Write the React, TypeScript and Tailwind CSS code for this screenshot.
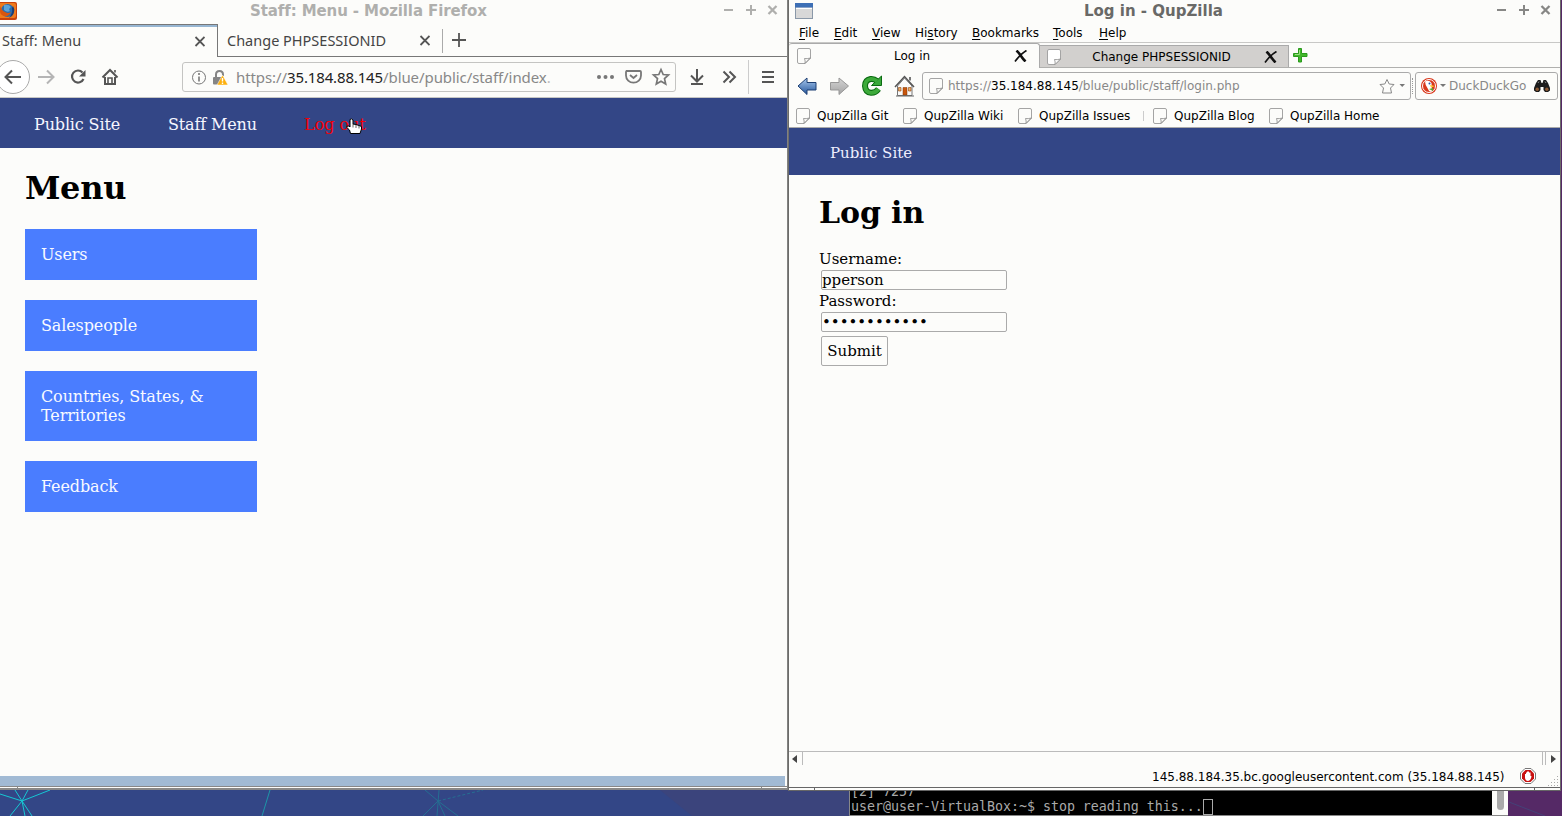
import type { ReactNode } from "react";

const sans = "font-['DejaVu_Sans',sans-serif]";
const ubuntu = "font-['Noto_Sans',sans-serif]";

function WindowButtons({ color }: { color: string }) {
  return (
    <svg width="54" height="12" viewBox="0 0 54 12" className="shrink-0" stroke={color} strokeWidth="2" fill="none">
      <path d="M0 6H9M22 6H32M27 1V11" />
      <path d="M44.500 2L52.500 10M44.500 10L52.500 2" strokeWidth="2.300" />
    </svg>
  );
}

function PageIcon({ white }: { white?: boolean }) {
  return (
    <svg width="14" height="16" viewBox="0 0 14 16" className="shrink-0" fill={white ? "#fff" : "none"} stroke="#a4a4a4" strokeWidth="1">
      <path d="M2 .5H12Q13.500 .5 13.500 2V10L8 15.500H2Q.5 15.500 .5 14V2Q.5 .5 2 .5Z" />
      <path d="M8 15.500Q8.500 13 7.500 10.500Q10 11 13.500 10Z" stroke="#888" strokeWidth=".8" />
    </svg>
  );
}

function TabX() {
  return (
    <svg width="13" height="12" viewBox="0 0 13 12" className="shrink-0" fill="none" stroke="#111">
      <path d="M2.500 .5Q5 3 7 6T11.500 11.500" strokeWidth="2.600" />
      <path d="M12.500 .5Q7 3.500 1 11.500" strokeWidth="1.700" />
    </svg>
  );
}

function FirefoxX() {
  return (
    <svg width="11" height="11" viewBox="0 0 11 11" className="shrink-0" stroke="#555" strokeWidth="1.800">
      <path d="M1.500 1L10.500 10M10.500 1L1.500 10" />
    </svg>
  );
}

function FirefoxLogo() {
  return (
    <svg width="17" height="18" viewBox="0 0 17 18" className="shrink-0">
      <rect x="-4" y="0" width="21" height="18" rx="2" fill="#c9420b" />
      <rect x="-4" y="1" width="20" height="15" rx="2" fill="#ef7a1c" />
      <circle cx="7.500" cy="8.500" r="6.500" fill="#2b6cae" />
      <path d="M4 3Q9 2 11 5Q8 7 10 9Q7 11 4 8Z" fill="#5ba3d9" />
      <path d="M0 4Q2 9 5 10Q8 12 11 10Q9 15 4 14Q0 13 0 9Z" fill="#d9560f" />
      <path d="M13 4Q16 9 12 14L9 16Q13 11 12 6Z" fill="#1c3d73" />
    </svg>
  );
}

function FirefoxWindow() {
  return (
    <section className="absolute left-0 top-0 flex h-[790px] w-[789px] flex-col border-r-2 border-[#828280] bg-[#fcfcfa]">
      <header className="flex h-6 shrink-0 items-start">
        <div className="w-[250px] pt-0.5"><FirefoxLogo /></div>
        <h2 className={`${sans} w-[474px] pt-0.5 text-[15px] leading-[18px] font-bold tracking-[-0.1px] whitespace-nowrap text-[#afafad]`}>Staff: Menu - Mozilla Firefox</h2>
        <div className="pt-1"><WindowButtons color="#afafad" /></div>
      </header>

      <div className={`${ubuntu} flex h-[33px] shrink-0 text-[14.5px] text-[#444]`}>
        <div className="flex w-[218px] items-center border-t border-r border-[#777] pl-0.5 shadow-[inset_0_2px_0_#97b6d2]">
          <span className="w-[192px] tracking-[0.1px]">Staff: Menu</span>
          <FirefoxX />
        </div>
        <div className="flex flex-1 items-center border-b border-[#777] pt-px pl-[9px]">
          <span className="w-[192px] whitespace-nowrap">Change PHPSESSIONID</span>
          <FirefoxX />
          <div className="ml-3 h-6 w-px bg-[#aaa]" />
          <svg width="14" height="14" viewBox="0 0 14 14" className="ml-[9px] mb-0.5" stroke="#555" strokeWidth="1.800"><path d="M0 7H14M7 0V14" /></svg>
        </div>
      </div>

      <div className="flex h-[41px] shrink-0 items-center border-b border-[#c6c6c4]">
        <svg width="182" height="40" viewBox="0 0 182 40" className="shrink-0" fill="none" stroke="#555" strokeWidth="2">
          <circle cx="13" cy="20" r="16.500" strokeWidth="1" stroke="#aaa" fill="#fff" />
          <path d="M21 20H6M12 13.500L5.500 20L12 26.500" />
          <path d="M38 20H53M47 13.500L53.500 20L47 26.500" stroke="#b5b5b5" />
          <path d="M82.500 15.500A6 6 0 1 0 83.500 22" strokeWidth="2.200" />
          <path d="M85.500 13V19.500H79Z" fill="#555" stroke="none" />
          <path d="M102.500 20.500L110 13L117.500 20.500M105 20V27H115V20" />
          <path d="M108 27V21H112V27M115 15.500V13" strokeWidth="1.600" />
        </svg>
        <div className={`${ubuntu} flex h-[30px] w-[494px] shrink-0 items-center rounded-[3px] border border-[#c4c4c2] pl-[9px] text-[15px] text-[#888]`}>
          <svg width="36" height="18" viewBox="0 0 36 18" className="mt-0.5 shrink-0" fill="none">
            <circle cx="7" cy="8.500" r="6.500" stroke="#777" />
            <path d="M7 7.500V12.500M7 4V6" stroke="#777" strokeWidth="1.600" />
            <path d="M24 8V5.500Q24 2 27.500 2Q31 2 31 5.500V7" stroke="#858585" strokeWidth="2" />
            <rect x="21" y="8" width="10" height="7.500" rx="1" fill="#858585" />
            <path d="M30.500 6L36 16H25Z" fill="#fdb00d" stroke="#fff" strokeWidth=".5" />
            <path d="M30.500 9V12.500M30.500 13.500V15" stroke="#fff" strokeWidth="1.400" />
          </svg>
          <span className="ml-2 w-[318px] shrink-0 tracking-[-0.08px] whitespace-nowrap">https://<span className="tracking-[-0.15px] text-[#222]">35.184.88.145</span>/blue/public/staff/index<span className="text-[#bbb]">.</span></span>
          <svg width="76" height="20" viewBox="0 0 76 20" className="ml-[41px] shrink-0" fill="none" stroke="#777" strokeWidth="2">
            <g fill="#777" stroke="none"><circle cx="4" cy="10" r="2" /><circle cx="10.500" cy="10" r="2" /><circle cx="17" cy="10" r="2" /></g>
            <path d="M30 4H44Q45 4 45 5V8.500A7.500 7.200 0 0 1 30 8.500V5Q30 4 31 4ZM34 8L37.500 11L41 8" strokeWidth="1.800" transform="translate(1 0)" />
            <path d="M66 2.500L68.200 7.500L73.500 8L69.500 11.600L70.700 17L66 14.200L61.300 17L62.500 11.600L58.500 8L63.800 7.500Z" strokeWidth="1.700" />
          </svg>
        </div>
        <svg width="111" height="40" viewBox="0 0 111 40" className="shrink-0" fill="none" stroke="#555" strokeWidth="2">
          <path d="M21 12V24M15 18.500L21 24.500L27 18.500M15 27H27" />
          <path d="M47.500 14.500L53 20L47.500 25.500M53.500 14.500L59 20L53.500 25.500" />
          <path d="M72.500 3V37" stroke="#ccc" strokeWidth="1" />
          <path d="M86 15H98M86 20H98M86 25H98" />
        </svg>
      </div>

      <nav className="flex h-[50px] shrink-0 items-center bg-[#334686] pt-[3px] font-['DejaVu_Serif',serif] text-[16px] tracking-[-0.14px] text-[#f6f6ff]">
        <a className="ml-[34px] w-[134px] whitespace-nowrap">Public Site</a>
        <a className="w-[136px] whitespace-nowrap">Staff Menu</a>
        <a className="relative tracking-normal whitespace-nowrap text-[#f50006]">
          Log out
          <svg width="17" height="18" viewBox="0 0 17 18" className="absolute top-[5px] left-[42px]" fill="#fff" stroke="#000" strokeWidth="1">
            <path d="M4 1.500Q5.500 0 7 2V6L10 6.500L13 7.500L15.500 8.500V11L14 15.500H4.500L3.500 12L.8 9.500Q.5 7.500 3 8L4 9Z" />
            <path d="M7 6V9.500M10 7V10M13 8V10.500" strokeWidth=".6" />
          </svg>
        </a>
      </nav>

      <main className="flex-1 pl-[25px] font-['DejaVu_Serif',serif] text-black">
        <h1 className="pt-[21px] text-[32px] leading-[38px] font-bold tracking-[-0.3px]">Menu</h1>
        <ul className="mt-[22px] flex w-[232px] flex-col gap-5 text-[16px] leading-[19px] tracking-[-0.12px] text-[#f8faff]">
          {["Users", "Salespeople", "Countries, States, & Territories", "Feedback"].map((t) => (
            <li key={t} className="bg-[#4a7dff] p-4">{t}</li>
          ))}
        </ul>
      </main>
      <div className="mr-0.5 h-[10px] shrink-0 bg-[#a1bad4]" />
      <div className="flex h-1 shrink-0 border-t border-b-2 border-[#888]">
        <div className="w-[18px] border-r border-[#888]" />
        <div className="w-[744px] border-r border-[#888]" />
      </div>
    </section>
  );
}

function MenuItem({ pre, k, post, w }: { pre?: string; k: string; post: string; w: string }) {
  return <span className={`${w} shrink-0`}>{pre}<u className="underline-offset-2">{k}</u>{post}</span>;
}

function Bookmark({ w, children }: { w: string; children: ReactNode }) {
  return <div className={`${w} flex shrink-0 items-center gap-[7px] whitespace-nowrap`}><PageIcon />{children}</div>;
}

function Toolbar() {
  return (
    <div className="flex h-[36px] shrink-0 items-center">
      <svg width="133" height="32" viewBox="0 0 133 32" className="shrink-0">
        <defs>
          <linearGradient id="b" x2="0" y2="1"><stop stopColor="#a9c9ee" /><stop offset="1" stopColor="#24569c" /></linearGradient>
          <linearGradient id="g" x2="0" y2="1"><stop stopColor="#d4d4d4" /><stop offset="1" stopColor="#a4a4a4" /></linearGradient>
        </defs>
        <path d="M9 16L18 8V12.500H27V20H18V24.500Z" fill="url(#b)" stroke="#1d3f73" />
        <path d="M59.500 16L50 8V12.500H41.500V20H50V24.500Z" fill="url(#g)" stroke="#979797" />
        <path d="M88 11Q85 8.500 81.500 9Q76 10 76 16Q76.500 22.500 82 22.800Q86.500 23 89.500 19" fill="none" stroke="#0b6b12" strokeWidth="6" />
        <path d="M92.500 6V15.500H82.500Z" fill="#39a83a" stroke="#0b6b12" />
        <path d="M88 11Q85 8.500 81.500 9Q76 10 76 16Q76.500 22.500 82 22.800Q86.500 23 89.500 19" fill="none" stroke="#3daa3a" strokeWidth="3.800" />
        <path d="M108.500 16V25.500H123V16L115.500 8Z" fill="#fafafa" stroke="#777" />
        <path d="M106 17L115.500 6.500L125 17" fill="none" stroke="#555" strokeWidth="1.500" />
        <path d="M121 7V10.500" stroke="#777" strokeWidth="2" />
        <path d="M114 17.500H118V25H114Z" fill="#c9560c" stroke="#7d3705" strokeWidth=".5" />
        <path d="M109.500 17.500H112V21H109.500ZM119.500 17.500H122V21H119.500Z" fill="#e8b070" stroke="#944408" strokeWidth=".6" />
        <path d="M107 26H125" stroke="#666" />
      </svg>
      <div className={`${sans} flex h-[28px] w-[489px] shrink-0 items-center rounded-[3px] border border-[#aaa] pl-[6px] text-[12px] text-[#888]`}>
        <PageIcon />
        <span className="ml-[5px] w-[430px] whitespace-nowrap">https://<span className="text-black">35.184.88.145</span>/blue/public/staff/login.php</span>
        <svg width="28" height="16" viewBox="0 0 28 16" className="shrink-0" fill="none" stroke="#888">
          <path d="M9 1.500L11.200 6L16 6.500L12.500 10L13.500 15H4.500L5.500 10L2 6.500L6.800 6Z" />
          <path d="M21.500 6H27L24.200 9Z" fill="#777" stroke="none" />
        </svg>
      </div>
      <div className="ml-px mr-[2px] h-4 w-px border-l border-dotted border-[#999]" />
      <div className={`${sans} flex h-[28px] w-[143px] shrink-0 items-center rounded-[3px] border border-[#aaa] pl-[5px] text-[12px] text-[#888]`}>
        <svg width="28" height="16" viewBox="0 0 28 16" className="shrink-0">
          <circle cx="8" cy="8" r="8" fill="#d9381c" /><circle cx="8" cy="8" r="6.500" fill="none" stroke="#fff" />
          <path d="M4 3.500Q8 1.500 10.500 5L11 13.500Q8 14.500 7 11Q4 7 4 3.500Z" fill="#fff" />
          <path d="M9 7L14 8L10 9.500Z" fill="#fc3" /><path d="M8 11L12 10V13Z" fill="#5a3" /><circle cx="8.500" cy="5.500" r="1" fill="#25a" />
          <path d="M19 6H25L22 9Z" fill="#777" />
        </svg>
        <span className="w-[85px] whitespace-nowrap">DuckDuckGo</span>
        <svg width="16" height="12" viewBox="0 0 16 12" className="shrink-0" fill="#1c1c1c">
          <path d="M4 0H6.500L7.500 3H8.500L9.500 0H12L14 3L16 8V10.500L14 12H11L9.500 10V7H6.500V10L5 12H2L0 10.500V8L2 3Z" />
          <circle cx="3.200" cy="9.200" r="1.700" fill="#8e5a34" /><circle cx="12.800" cy="9.200" r="1.700" fill="#8e5a34" />
          <path d="M4 3L5 1.500M11 1.500L12 3" stroke="#888" />
        </svg>
      </div>
    </div>
  );
}

function QupZillaWindow() {
  return (
    <section className="absolute left-[788px] top-0 flex h-[791px] w-[773px] flex-col border-x border-[#6c6c6a] bg-[#fcfcfa] text-black">
      <header className="flex h-[23px] shrink-0 items-start">
        <svg width="19" height="17" viewBox="0 0 19 17" className="mt-[3px] ml-1.5 shrink-0">
          <rect x=".5" y=".5" width="17" height="15" fill="#d8d8d8" stroke="#8a98a8" />
          <rect width="18" height="4.500" fill="#3d6fb5" /><path d="M1 5.500H17" stroke="#fff" />
        </svg>
        <h2 className={`${sans} ml-[270px] w-[413px] pt-0.5 text-[15px] leading-[18px] font-bold whitespace-nowrap text-[#696967]`}>Log in - QupZilla</h2>
        <div className="pt-1"><WindowButtons color="#878785" /></div>
      </header>
      <div className={`${sans} flex h-[20px] shrink-0 items-center border-b border-[#c8c8c6] pl-2.5 text-[12px]`}>
        <MenuItem w="w-[35px]" k="F" post="ile" />
        <MenuItem w="w-[38px]" k="E" post="dit" />
        <MenuItem w="w-[43px]" k="V" post="iew" />
        <MenuItem w="w-[57px]" pre="Hi" k="s" post="tory" />
        <MenuItem w="w-[81px]" k="B" post="ookmarks" />
        <MenuItem w="w-[46px]" k="T" post="ools" />
        <MenuItem w="w-[40px]" k="H" post="elp" />
      </div>
      <div className={`${sans} flex h-[25px] shrink-0 text-[12px]`}>
        <div className="flex w-[251px] shrink-0 items-center rounded-t-[3px] border-t border-r border-[#aaa] pl-2">
          <PageIcon />
          <span className="w-[203px] pr-px text-center">Log in</span>
          <TabX />
        </div>
        <div className="flex flex-1 items-end border-b border-[#b0b0ae]">
          <div className="flex h-[22px] w-[249px] shrink-0 items-center border-t border-r border-[#aaa] bg-[#d2d0ce] pl-[7px]">
            <PageIcon white />
            <span className="w-[203px] pr-0.5 text-center">Change PHPSESSIONID</span>
            <TabX />
          </div>
          <svg width="15" height="15" viewBox="0 0 15 15" className="mb-1 ml-1 shrink-0">
            <path d="M5.500 .5H8.500V5.500H14V8.500H8.500V14H5.500V8.500H.5V5.500H5.500Z" fill="#42b82b" stroke="#2a9a1c" />
            <path d="M6.500 2V6.500H2" fill="none" stroke="#9be082" />
          </svg>
        </div>
      </div>
      <Toolbar />
      <div className={`${sans} flex h-[24px] shrink-0 items-center border-b border-[#aaa] pl-[7px] text-[12px]`}>
        <Bookmark w="w-[107px]">QupZilla Git</Bookmark>
        <Bookmark w="w-[115px]">QupZilla Wiki</Bookmark>
        <Bookmark w="w-[125px]">QupZilla Issues</Bookmark>
        <div className="mr-[9px] h-[10px] w-px bg-[#ccc]" />
        <Bookmark w="w-[116px]">QupZilla Blog</Bookmark>
        <Bookmark w="w-[120px]">QupZilla Home</Bookmark>
      </div>
      <div className="flex flex-1 flex-col font-['DejaVu_Serif',serif] text-[15px]">
        <nav className="flex h-[47px] shrink-0 items-center bg-[#334686] pt-[3px] pl-[41px] text-[#eef]">Public Site</nav>
        <main className="flex flex-1 flex-col items-start pl-[30px]">
          <h1 className="mt-5 text-[30px] leading-[36px] font-bold tracking-[-0.1px]">Log in</h1>
          <label className="mt-[18px] leading-[20px]">Username:</label>
          <div className="mt-px ml-0.5 flex h-5 w-[186px] items-center rounded-[2px] border border-[#aaa]">pperson</div>
          <label className="mt-px leading-[20px]">Password:</label>
          <div className="mt-px ml-0.5 flex h-5 w-[186px] items-center rounded-[2px] border border-[#aaa] tracking-[-0.03px]">••••••••••••</div>
          <button className="mt-1 ml-0.5 h-[30px] w-[67px] rounded-[2px] border border-[#aaa]">Submit</button>
        </main>
      </div>
      <div className="flex h-[14px] shrink-0 items-center justify-between border-t border-[#bbb]">
        <div className="flex h-full w-[14px] items-center border-r border-[#bbb] pl-[3px]">
          <svg width="5" height="8" viewBox="0 0 5 8"><path d="M5 0V8L0 4Z" fill="#444" /></svg>
        </div>
        <div className="flex h-full w-[18px] items-center border-l border-[#bbb]">
          <div className="ml-0.5 h-full w-px bg-[#bbb]" />
          <svg width="5" height="8" viewBox="0 0 5 8" className="ml-[5px]"><path d="M0 0V8L5 4Z" fill="#444" /></svg>
        </div>
      </div>
      <div className={`${sans} flex h-[22px] shrink-0 items-center pl-[363px] text-[12px]`}>
        <span className="w-[368px] pt-px whitespace-nowrap">145.88.184.35.bc.googleusercontent.com (35.184.88.145)</span>
        <svg width="16" height="16" viewBox="0 0 16 16" className="shrink-0">
          <path d="M5 .5H11L15.500 5V11L11 15.500H5L.5 11V5Z" fill="#fff" stroke="#777" />
          <path d="M5.500 2H10.500L14 5.500V10.500L10.500 14H5.500L2 10.500V5.500Z" fill="#c8100f" />
          <path d="M5 6V10Q5.500 13 8 13Q11 12.500 11.500 8H10.500V4.500H9V3.500H7V4.500H6V6Z" fill="#fff" />
        </svg>
        <svg width="12" height="12" viewBox="0 0 12 12" className="mt-2.5 ml-3 shrink-0" fill="none" stroke="#aaa" strokeDasharray="1 2">
          <path d="M9 1.500H12M6 4.500H12M3 7.500H12M0 10.500H12" />
        </svg>
      </div>
      <div className="flex h-1 shrink-0 border-t border-b border-[#666]">
        <div className="w-[26px] border-r border-[#666]" />
        <div className="w-[720px] border-r border-[#666]" />
      </div>
    </section>
  );
}

function Wallpaper() {
  return (
    <svg width="1562" height="26" viewBox="0 790 1562 26" className="absolute bottom-0 left-0">
      <rect y="790" width="1562" height="26" fill="#334686" />
      <path d="M660 790H850V816H692Z" fill="#3b447c" />
      <rect x="1507" y="790" width="55" height="26" fill="#552966" />
      <path d="M1509 802L1545 816" stroke="#444278" fill="none" />
      <path d="M0 794L22 801L50 790M15 790L22 801L32 816M28 790L22 801L10 816M22 801L25 816" stroke="#16c8d4" fill="none" />
      <path d="M270 790L262 816" stroke="#1e96a8" />
      <path d="M425 790L438 801L458 816M439 790L437 816M438 801L423 816M438 801L445 816" stroke="#256f92" fill="none" />
      <path d="M438 801L483 790" stroke="#256f92" strokeDasharray="3 2" />
    </svg>
  );
}

function Terminal() {
  return (
    <section className="absolute left-[849px] top-[780px] flex h-[36px] w-[659px] overflow-hidden border-b border-l border-[#888] bg-black font-['DejaVu_Sans_Mono',monospace] text-[13.3px] leading-[15px] tracking-[-0.01px] text-[#aaa]">
      <div className="w-[642px] pt-[4px] pl-px whitespace-pre">
        <div>[2] 7257</div>
        <div className="flex">user@user-VirtualBox:~$ stop reading this...<span className="h-4 w-[10px] border border-[#aaa]" /></div>
      </div>
      <div className="flex flex-1 justify-center bg-[#fcfcfa]"><div className="h-[30px] w-[7px] rounded-b-full bg-[#aaa]" /></div>
    </section>
  );
}

export default function App() {
  return (
    <div className="relative h-[816px] w-[1562px] overflow-hidden bg-[#552966]">
      <Wallpaper />
      <Terminal />
      <FirefoxWindow />
      <QupZillaWindow />
    </div>
  );
}
